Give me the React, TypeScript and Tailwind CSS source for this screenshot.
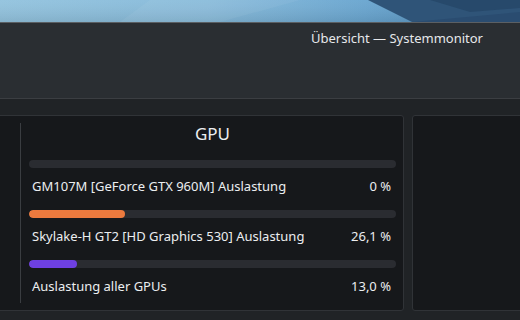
import React from "react";

const font = { fontFamily: '"Noto Sans", "Open Sans", sans-serif' };

function Row({ label, value, pct, color }: { label: string; value: string; pct: number; color: string }) {
  return (
    <div className="flex flex-col">
      <div className="h-[8px] w-full rounded-full bg-[#2a2c31] overflow-hidden">
        <div className={`h-full rounded-full ${color}`} style={{ width: `${pct}%` }} />
      </div>
      <div className="mt-[8px] flex h-[20px] items-center justify-between pl-[3px] pr-[5px] text-[13px] leading-[20px] text-[#eceef0]">
        <span>{label}</span>
        <span>{value}</span>
      </div>
    </div>
  );
}

export default function App() {
  return (
    <div className="relative flex h-[320px] w-[520px] flex-col overflow-hidden bg-[#202326]" style={font}>
      <div className="relative h-[22px] w-full overflow-hidden bg-[linear-gradient(90deg,#93c3de_0%,#86bada_40%,#6aa6d0_70%,#4f8ab8_100%)]">
        <svg className="absolute inset-0" width="520" height="22" viewBox="0 0 520 22">
          <polygon points="0,0 520,0 520,22 0,22" fill="url(#g1)" opacity="0.35" />
          <polygon points="150,0 300,0 220,22 120,22" fill="#ffffff" opacity="0.05" />
          <polygon points="368,0 520,0 520,22 412,22" fill="#2f5478" />
          <polygon points="430,0 520,0 520,8 470,12" fill="#27496b" />
          <polygon points="412,22 520,12 520,22" fill="#2a4c70" />
          <defs>
            <linearGradient id="g1" x1="0" y1="0" x2="0" y2="1">
              <stop offset="0" stopColor="#ffffff" stopOpacity="0.1" />
              <stop offset="1" stopColor="#000000" stopOpacity="0.25" />
            </linearGradient>
          </defs>
        </svg>
      </div>
      <div className="h-px w-full bg-[#5b5f63]" />
      <div className="flex h-[75px] w-full justify-end bg-[#2a2e32] pr-[37px] pt-[5px]">
        <span className="text-[13px] leading-[20px] text-[#e6e8ea]">Übersicht — Systemmonitor</span>
      </div>
      <div className="h-px w-full bg-[#3b3e42]" />
      <div className="flex gap-[8px] pt-[16px]">
        <div className="ml-[-10px] flex h-[196px] w-[414px] shrink-0 rounded-[3px] border border-[#303337] bg-[#16181b] py-[7px]">
          <div className="w-[30px] shrink-0 border-r border-[#3a3d41]" />
          <div className="flex flex-1 flex-col pl-[8px] pr-[7px]">
            <div className="flex h-[23px] items-center justify-center text-[17px] leading-[24px] text-[#eceef0] mt-[-1px]">GPU</div>
            <div className="mt-[15px] flex flex-col gap-[14px]">
              <Row label="GM107M [GeForce GTX 960M] Auslastung" value="0 %" pct={0} color="bg-[#ec7a3e]" />
              <Row label="Skylake-H GT2 [HD Graphics 530] Auslastung" value="26,1 %" pct={26.1} color="bg-[#ec7a3e]" />
              <Row label="Auslastung aller GPUs" value="13,0 %" pct={13} color="bg-[#6e40e2]" />
            </div>
          </div>
        </div>
        <div className="h-[196px] w-[200px] shrink-0 rounded-[3px] border border-[#303337] bg-[#16181b]" />
      </div>
    </div>
  );
}
